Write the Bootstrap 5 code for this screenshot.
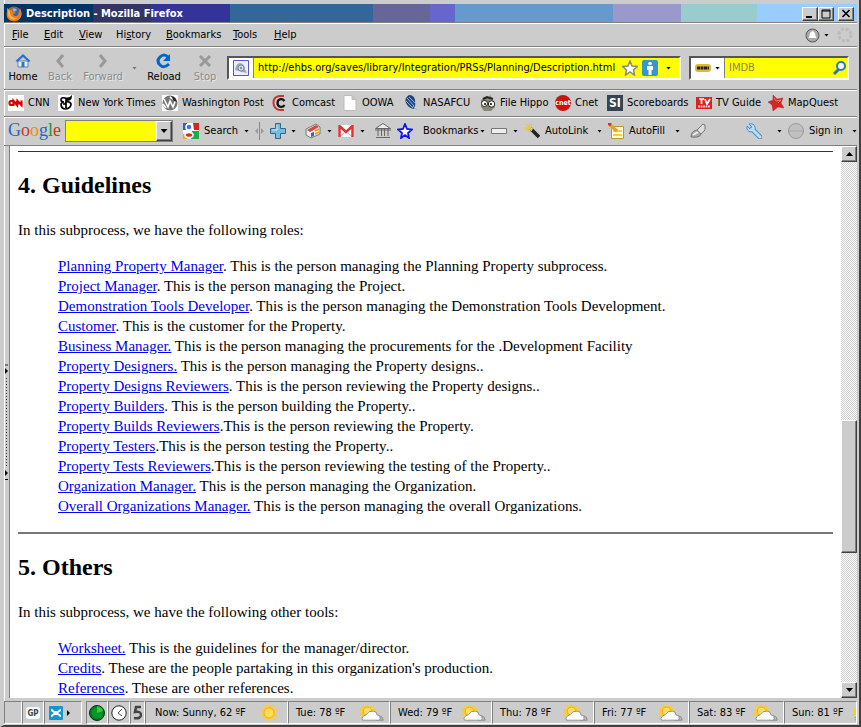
<!DOCTYPE html>
<html lang="en">
<head>
<meta charset="utf-8">
<meta name="viewport" content="width=device-width, initial-scale=1">
<title>Description - Mozilla Firefox</title>
<link href="https://cdn.jsdelivr.net/npm/bootstrap@5.3.0/dist/css/bootstrap.min.css" rel="stylesheet">
<style>
:root{--face:#ccc;--dark:#808080;--hot:#ff0}
body{font:11px/14px "DejaVu Sans Condensed",Tahoma,"Noto Sans",sans-serif;color:#000;background:var(--face)}
svg{flex:none;display:block}
button{font:inherit;color:inherit;background:none;border:0;padding:0;text-align:left}
.win{border:solid;border-width:0 2px 2px 4px;border-color:var(--face) #404040 #404040 var(--face);padding-right:2px;box-shadow:inset 1px 0 #fff}
.bar{border-bottom:1px solid var(--dark);box-shadow:inset 0 1px #fff;flex:none}
.titlebar{margin-top:4px;height:18px;padding:1px 3px 0 2px;color:#fff;font-weight:bold;background:linear-gradient(90deg,#036 10.4%,#336 10.4% 17.2%,#339 17.2% 26.5%,#369 26.5% 43.3%,#669 43.3% 49.9%,#66c 49.9% 52.9%,#69c 52.9% 71.4%,#99c 71.4% 79.4%,#9cc 79.4% 88.3%,#9cf 88.3%)}
.raised{background:var(--face);border:1px solid;border-color:#fff #404040 #404040 #fff;box-shadow:inset -1px -1px var(--dark);display:flex;align-items:center;justify-content:center;flex:none}
.titlebar .raised{width:16px;height:14px}
.menus{height:25px;border-top:1px solid var(--dark);padding-top:1px}
.menus>button{white-space:nowrap;flex:none}
.menus>:nth-child(1){width:32px}.menus>:nth-child(2){width:35px}.menus>:nth-child(3){width:37px}
.menus>:nth-child(4){width:50px}.menus>:nth-child(5){width:67px}.menus>:nth-child(6){width:41px}
.navrow{height:43px}
.tool{display:flex;flex-direction:column;align-items:center;gap:1px;width:36px;flex:none}
.tool:disabled{color:#8a8a8a;text-shadow:1px 1px #e8e8e8}
.tool.first{width:38px}.tool.mid{width:46px}.tool.wide{width:50px}
.sunken{border:2px solid;border-color:#555 #fff #fff #555;background:var(--hot);height:24px}
.sunken input,.combo input{background:transparent;border:0;outline:0;min-width:0;padding:0 4px;font:inherit;color:#000;flex:1}
.sunken input::placeholder{color:#8a8a50}
.seek{width:160px;flex:none}
.chip{background:#fff;align-self:stretch;border-right:1px solid var(--dark)}
.arr{width:5px;height:3px;background:#000;clip-path:polygon(0 0,100% 0,50% 100%);flex:none}
.arr.big{width:7px;height:4px}
.marks{height:27px}
.marks a{color:#000;text-decoration:none;display:flex;align-items:center;gap:4px;white-space:nowrap;flex:none}
.marks>:nth-child(1){width:50px}.marks>:nth-child(2){width:104px}.marks>:nth-child(3){width:110px}
.marks>:nth-child(4){width:70px}.marks>:nth-child(5){width:61px}.marks>:nth-child(6){width:77px}
.marks>:nth-child(7){width:75px}.marks>:nth-child(8){width:52px}.marks>:nth-child(9){width:89px}.marks>:nth-child(10){width:72px}
.goog{height:29px;gap:6px}
.goog button{display:flex;align-items:center;gap:5px;white-space:nowrap;flex:none}
.goog .arr{margin-left:auto}
.logo{font:18px/22px "Liberation Serif",serif;width:51px;flex:none;padding-bottom:3px}
.combo{border:1px solid var(--dark);background:var(--hot);width:108px;height:22px;flex:none}
.goog .combo .raised{width:16px;height:20px}
.w24{width:25px}.w26{width:27px}.w62{width:62px}.w66{width:66px}.w68{width:69px}.w72{width:72px}.w78{width:78px}.w36{width:36px}
.splitter{width:6px;border-right:1px solid var(--dark);flex:none}
.grip{width:1px;height:88px;background:repeating-linear-gradient(#333 0 1px,transparent 1px 3px)}
.page{background:#fff;font:15px/20px "Liberation Serif","Times New Roman",serif;padding:0 8px;overflow:hidden}
.page h2{font-size:24px;line-height:28px;font-weight:bold;margin:19px 0 21px}
.page hr{margin:0;border:0;border-top:2px solid #777;opacity:1}
.page hr:first-child{margin-top:5px;border-top:1px solid #333}
.page p{margin:0 0 16px}
.page ul{margin:0 0 16px;padding-left:40px;list-style:none}
.page a{color:#00e;text-decoration:underline}
.scroll{width:16px;background:repeating-conic-gradient(#ccc 0 25%,#fff 0 50%) 0 0/2px 2px;flex:none}
.scroll .raised{height:16px;width:100%}
.scroll .thumb{height:133px}
.above{flex:259 0 0}.below{flex:129 0 0}
.status{height:25px;flex:none;margin-top:2px}
.cell{border:1px solid;border-color:var(--dark) #fff #fff var(--dark);display:flex;align-items:center;justify-content:center;flex:none;height:23px;white-space:nowrap}
.day{justify-content:space-between;padding:0 4px 0 7px;width:102px}
.now{width:143px;padding:0 8px 0 9px}
.day.slim{width:95px}.day.end{flex:1 1 0;overflow:hidden;justify-content:flex-start;gap:8px}
.c14{width:15px}.c18{width:18px}.c22{width:22px}.c38{width:38px}
</style>
<script src="https://cdn.jsdelivr.net/npm/bootstrap@5.3.0/dist/js/bootstrap.bundle.min.js"></script>
</head>
<body>
<svg width="0" height="0" class="position-absolute" aria-hidden="true">
<symbol id="sun" viewBox="0 0 20 20"><path d="M10 0l2 4 4-2-1 4 5 0-4 4 4 4-5-1 1 5-4-3-2 4-2-4-4 3 1-5-5 0 4-4-4-3 5 0-1-5 4 3z" fill="#fc3"/><circle cx="10" cy="10" r="5" fill="#fd5" stroke="#fa1"/></symbol>
<symbol id="pcl" viewBox="0 0 28 20"><path d="M9 0l2 3 4-2 0 4 4 0-2 4 3 3-5 1-1 4-4-3-4 3-1-4-4 0 2-4-3-3 4-1 0-4 4 2z" fill="#fc2"/><circle cx="9.500" cy="8" r="4.500" fill="#fd6" stroke="#f9a51a"/><path d="M19 18q0-5 4-5 4 1 4 5z" fill="#bbb" stroke="#888"/><path d="M4 18q-2-4 4-6 3-5 8-4 4 0 4 4 5 1 3 6z" fill="#fff" stroke="#888"/></symbol>
</svg>
<div class="win d-flex flex-column vh-100 overflow-hidden">

<header class="titlebar d-flex align-items-center flex-shrink-0">
<svg width="16" height="16" viewBox="0 0 16 16" class="me-1"><circle cx="8" cy="8" r="7.500" fill="#d8541b"/><circle cx="8.500" cy="6.500" r="5" fill="#3468a8"/><path d="M6 3q3-2 5 1l-3 2z" fill="#8bd"/><path d="M1 2l3 2 3-1-1 2 4 2-3 1q1 4 5 1l2-7q4 8-2 12-8 3-11-3z" fill="#f07a1f"/><path d="M2 4q2 0 2 3 1 5 7 5-3 3-6 1-4-2-3-9" fill="#fdb338"/></svg>
<span class="flex-grow-1">Description - Mozilla Firefox</span>
<button class="raised" aria-label="Minimize"><svg width="10" height="9"><path d="M1 8h6" stroke="#000" stroke-width="2"/></svg></button>
<button class="raised" aria-label="Maximize"><svg width="10" height="10"><path d="M1 1h8v8H1zM1 2h8" fill="none" stroke="#000"/></svg></button>
<button class="raised ms-1" aria-label="Close"><svg width="10" height="9"><path d="M1.500 1l7 7M8.500 1l-7 7" stroke="#000" stroke-width="1.600"/></svg></button>
</header>

<nav class="bar menus d-flex align-items-center ps-2">
<button><u>F</u>ile</button><button><u>E</u>dit</button><button><u>V</u>iew</button><button>Hi<u>s</u>tory</button><button><u>B</u>ookmarks</button><button><u>T</u>ools</button><button><u>H</u>elp</button>
<button class="ms-auto d-flex align-items-center gap-1 me-2" aria-label="Updates"><svg width="15" height="15"><circle cx="7.500" cy="7.500" r="6.500" fill="#aaa" stroke="#555"/><path d="M7.500 3q3 1 3 5l1 2h-8l1-2q0-4 3-5z" fill="#fff"/></svg><span class="arr"></span></button>
<svg width="16" height="16" class="me-1"><circle cx="8" cy="8" r="6" fill="none" stroke="#bbb" stroke-width="3" stroke-dasharray="3 1.710"/></svg>
</nav>

<div class="bar navrow d-flex align-items-center">
<button class="tool first"><svg width="16" height="16" viewBox="0 0 15 16"><path d="M2.500 8h10v6h-10z" fill="#e8f0ff" stroke="#58a"/><path d="M0 8l7.500-7L15 8l-2 1-5.500-5L2 9z" fill="#2a6fd6"/><path d="M6 9h3v5H6z" fill="#37a"/></svg>Home</button>
<button class="tool" disabled><svg width="12" height="16"><path d="M9 2L4 8l5 6" fill="none" stroke="#999" stroke-width="3"/></svg>Back</button>
<button class="tool wide" disabled><svg width="12" height="16"><path d="M3 2l5 6-5 6" fill="none" stroke="#999" stroke-width="3"/></svg>Forward</button>
<button class="px-1" disabled aria-label="Recent pages"><span class="arr d-block bg-secondary"></span></button>
<button class="tool mid"><svg width="16" height="16" viewBox="0 0 16 16"><path d="M12 4Q8 0 4 4T4 12t9-1" fill="none" stroke="#06c" stroke-width="3"/><path d="M14 1v7H7z" fill="#06c"/></svg>Reload</button>
<button class="tool" disabled><svg width="14" height="16"><path d="M2 3l10 10M12 3L2 13" stroke="#999" stroke-width="3"/></svg>Stop</button>
<div class="sunken d-flex align-items-center flex-grow-1 ms-1 me-2">
<span class="chip px-1 d-flex align-items-center"><svg width="16" height="16"><path d="M.5.5h15v15H.5z" fill="#eef" stroke="#55c"/><path d="M2 10q1-7 5-7 5 1 5 6l2 4-5-1z" fill="#9aabb5"/><circle cx="8" cy="8" r="3" fill="#cde" stroke="#789"/><circle cx="8" cy="8" r="1" fill="#678"/></svg></span>
<input type="text" aria-label="Location" value="http://ehbs.org/saves/library/Integration/PRSs/Planning/Description.html">
<svg width="16" height="16" viewBox="0 0 16 16"><path d="M8 1l2 5 5.500.5-4 3.500 1 5L8 12l-4.500 3 1-5-4-3.500L6 6z" fill="#fff" stroke="#888" stroke-width="1.500"/></svg>
<svg width="16" height="16" class="ms-1"><rect width="16" height="16" rx="2" fill="#39c"/><circle cx="8" cy="3.500" r="1.800" fill="#fff"/><path d="M5 6h6v4h-1.500v5h-3v-5H5z" fill="#fff"/></svg>
<span class="arr mx-2"></span></div>
<div class="sunken seek d-flex align-items-center me-2">
<button class="chip d-flex align-items-center gap-1 px-1" aria-label="Search engine"><svg width="16" height="12"><rect y="2" width="16" height="8" rx="3" fill="#db3"/><path d="M2 6h12" stroke="#222" stroke-width="3" stroke-dasharray="3 .5"/></svg><span class="arr"></span></button>
<input type="text" placeholder="IMDB" aria-label="Search IMDB">
<svg width="15" height="16"><path d="M7 9l-5 5" stroke="#27a" stroke-width="3"/><circle cx="9" cy="6" r="4" fill="#eff" stroke="#37b" stroke-width="2"/></svg></div>
</div>

<nav class="bar marks d-flex align-items-center ps-1">
<a href="#"><svg width="16" height="16"><path fill="#fff" d="M0 0h16v16H0z"/><path d="M5 6H3Q1.500 6 1.500 8T3 10h2.500V6L9 10V6l0 0M9.500 10V6l4 4V5.500" fill="none" stroke="#d00" stroke-width="2.200"/></svg>CNN</a>
<a href="#"><svg width="16" height="16"><path fill="#fff" d="M0 0h16v16H0z"/><path d="M3 5q0-3 4-2t6-1q0 3-4 3l-1 2q4-1 5 2 0 4-5 5-5 0-5-5 1-2 3-2Q3 7 3 5M8 4v9M5 9h3" fill="none" stroke="#000" stroke-width="1.700"/></svg>New York Times</a>
<a href="#"><svg width="16" height="16"><path fill="#fff" d="M0 0h16v16H0z"/><circle cx="8" cy="8" r="7.500" fill="#777"/><path d="M2 4l4 8 2-6 3 6 3-8M1 9l3 4M8 2l3 2" fill="none" stroke="#fff" stroke-width="1.600"/><path d="M9 1q5 1 6 6l-3-1z" fill="#222"/></svg>Washington Post</a>
<a href="#"><svg width="16" height="16"><path d="M12 1Q1 0 1.500 8T12 15" fill="none" stroke="#c33" stroke-width="2"/><path d="M12.500 6Q11 4 9 4 5.500 4.500 5.500 8T9 12q2.500 0 3.500-2" fill="none" stroke="#111" stroke-width="2.200"/></svg>Comcast</a>
<a href="#"><svg width="16" height="16"><path d="M2 .5h8l4 4v11H2zM10 .5v4h4" fill="#fff" stroke="#bbb"/></svg>OOWA</a>
<a href="#"><svg width="16" height="16"><path d="M6 0q5 0 6 5t-1 9q-6-1-8-6T6 0z" fill="#247"/><path d="M4 3l7 8M3 6l7 7M6 2l6 6M10 11l4 4" stroke="#8be" fill="none"/></svg>NASAFCU</a>
<a href="#"><svg width="16" height="16"><path d="M1 5l4-3 3 1 3-3v4l3 2 1 6-4 4H4L1 12z" fill="#887"/><path d="M3 4l4-2 6 2" stroke="#222" stroke-width="2" fill="none"/><circle cx="4.500" cy="8.500" r="3" fill="#fff" stroke="#222"/><circle cx="11.500" cy="9" r="3.200" fill="#fff" stroke="#222"/><circle cx="5" cy="9" r="1"/><circle cx="11" cy="9" r="1"/></svg>File Hippo</a>
<a href="#"><svg width="16" height="16"><circle cx="8" cy="8" r="8" fill="#c11"/><text x="8" y="10" text-anchor="middle" font-size="7" font-weight="bold" fill="#fff">cnet</text></svg>Cnet</a>
<a href="#"><svg width="16" height="16"><path fill="#345" d="M0 0h16v16H0z"/><text x="8" y="12" text-anchor="middle" font-size="12" font-weight="bold" fill="#fff">SI</text></svg>Scoreboards</a>
<a href="#"><svg width="16" height="16"><path fill="#d22" d="M0 2h16v12H0z"/><path d="M3 4h5M5.500 4v5M9 4l2 5 3-5" fill="none" stroke="#fff" stroke-width="1.700"/><path d="M2 11.500h12" stroke="#fbb" stroke-width="2" stroke-dasharray="2 .5"/></svg>TV Guide</a>
<a href="#"><svg width="16" height="16"><path d="M5 0l4 4 6-1-2 5 3 5-6-1-5 4-1-6-4-3 5-2z" fill="#d22" stroke="#a33" stroke-width=".5"/><path d="M6 3l2 3 5-1-3 3" fill="none" stroke="#f77"/></svg>MapQuest</a>
</nav>

<div class="bar goog d-flex align-items-center ps-1">
<span class="logo"><span style="color:#26c">G</span><span style="color:#c32">o</span><span style="color:#d90">o</span><span style="color:#26c">g</span><span style="color:#292">l</span><span style="color:#c32">e</span></span>
<div class="combo d-flex align-items-center me-1"><input type="text" aria-label="Google search" class="w-100"><button class="raised" aria-label="History"><span class="arr big mx-auto"></span></button></div>
<button class="w66"><svg width="16" height="16"><path fill="#fff" d="M0 0h16v16H0z"/><path d="M10 0h6v7h-5z" fill="#d22"/><path d="M0 0h4v7H0z" fill="#26c"/><path d="M9 8h7v8H8z" fill="#2a4"/><path d="M0 11h4v5H0z" fill="#ea2"/><circle cx="6" cy="4" r="3" fill="#37d" stroke="#fff" stroke-width="1.500"/><ellipse cx="6" cy="12" rx="4" ry="2.500" fill="#c33" stroke="#fff" stroke-width="1.500"/></svg>Search<span class="arr"></span></button>
<svg width="9" height="18"><path d="M4.500 0v18" stroke="#888"/><path d="M3 6L0 9l3 3zM6 6l3 3-3 3z" fill="#999"/></svg>
<button class="w24 me-1" aria-label="Add"><svg width="16" height="16"><path d="M5.500.5h5v5h5v5h-5v5h-5v-5h-5v-5h5z" fill="#7bd" stroke="#368"/><path d="M7 2v5H2" fill="none" stroke="#cef"/></svg><span class="arr"></span></button>
<button class="w26" aria-label="News"><svg width="16" height="16"><path d="M1 6l10-5 4 3v7l-9 4-5-3z" fill="#eee" stroke="#777"/><path d="M2 7l9-5 3 2-9 5z" fill="#d44"/><path d="M6 10l3-1v4l-3 1z" fill="#36c"/><path d="M10 8l4-2M10 11l4-2" stroke="#e90" stroke-width="1.500"/></svg><span class="arr"></span></button>
<button class="w26 me-1" aria-label="Mail"><svg width="16" height="12"><path fill="#fff" d="M0 0h16v12H0z"/><path d="M1.500 12V1L8 7l6.500-6v11" fill="none" stroke="#d33" stroke-width="2.500"/><path d="M3 11l4-4M13 11L9 7" stroke="#daa"/></svg><span class="arr"></span></button>
<button aria-label="Bank"><svg width="16" height="16"><path d="M.5 5.500L8 .5l7.500 5zM1 14.500h14M3 6v7M6.500 6v7M9.500 6v7M13 6v7M0 7h16" fill="#eee" stroke="#666"/></svg></button>
<button class="me-1" aria-label="Bookmark"><svg width="16" height="16"><path d="M8 1l2 5 5 .5-4 3.500 1 5-4-3-4 3 1-5-4-3.500L6 6z" fill="#fff" stroke="#11e" stroke-width="1.800"/></svg></button>
<button class="w62 gap-0">Bookmarks<span class="arr"></span></button>
<button class="w26" aria-label="PageRank"><svg width="16" height="6"><path d="M.5.5h15v5H.5z" fill="#eee" stroke="#777"/></svg><span class="arr"></span></button>
<button class="w78"><svg width="16" height="16"><path d="M6 5l9 9" stroke="#222" stroke-width="3.500"/><path d="M5 4l3 3" stroke="#ccc" stroke-width="3"/><path d="M5 0v9M0 5h10M2 1l6 7M8 1L2 8" stroke="#e8c53a"/></svg>AutoLink<span class="arr"></span></button>
<button class="w72"><svg width="16" height="16"><path d="M3.500 3.500h12v12h-12z" fill="#ffd" stroke="#b92"/><path d="M5 8h9M5 12h9" stroke="#fc3" stroke-width="2"/><path d="M1 1l8 7" stroke="#e92" stroke-width="3"/><path d="M0 0l3 2" stroke="#c33" stroke-width="3"/></svg>AutoFill<span class="arr"></span></button>
<button class="ms-1" aria-label="Highlight"><svg width="16" height="16"><path d="M7 7l6-6 2 1v5l-4 4z" fill="#ddd" stroke="#777"/><path d="M1 14q0-6 6-7l4 4q-1 4-10 3z" fill="#aaa" stroke="#777"/><path d="M3 12l5-3" stroke="#eee" stroke-width="2"/></svg></button>
<button class="w36 ms-auto" aria-label="Settings"><svg width="16" height="16"><path d="M6 6l8 8" stroke="#468fc8" stroke-width="5" stroke-linecap="round"/><path d="M3 1l3 3-2 2-3-3q-1 5 4 6 5-1 4-5-1-4-6-3z" fill="#bdf" stroke="#468fc8"/><path d="M6 6l8 8" stroke="#bdf" stroke-width="3" stroke-linecap="round"/></svg><span class="arr"></span></button>
<button class="w68"><svg width="16" height="16"><circle cx="8" cy="8" r="7.500" fill="#c0c0c0" stroke="#999"/><path d="M1 8h14" stroke="#aaa"/></svg>Sign in<span class="arr"></span></button>
</div>

<main class="d-flex flex-grow-1 overflow-hidden">
<div class="splitter d-flex flex-column align-items-center justify-content-center gap-1">
<svg width="4" height="10"><path d="M0 1h3" stroke="#222"/><path d="M0 4l3 3-3 3z"/></svg><span class="grip"></span><svg width="4" height="11"><path d="M0 0l3 3-3 3zM0 9h3v1H0z"/></svg></div>
<article class="page flex-grow-1">
<hr>
<h2>4. Guidelines</h2>
<p>In this subprocess, we have the following roles:</p>
<ul>
<li><a href="#">Planning Property Manager</a>. This is the person managing the Planning Property subprocess.</li>
<li><a href="#">Project Manager</a>. This is the person managing the Project.</li>
<li><a href="#">Demonstration Tools Developer</a>. This is the person managing the Demonstration Tools Development.</li>
<li><a href="#">Customer</a>. This is the customer for the Property.</li>
<li><a href="#">Business Manager.</a> This is the person managing the procurements for the .Development Facility</li>
<li><a href="#">Property Designers.</a> This is the person managing the Property designs..</li>
<li><a href="#">Property Designs Reviewers</a>. This is the person reviewing the Property designs..</li>
<li><a href="#">Property Builders</a>. This is the person building the Property..</li>
<li><a href="#">Property Builds Reviewers</a>.This is the person reviewing the Property.</li>
<li><a href="#">Property Testers</a>.This is the person testing the Property..</li>
<li><a href="#">Property Tests Reviewers</a>.This is the person reviewing the testing of the Property..</li>
<li><a href="#">Organization Manager.</a> This is the person managing the Organization.</li>
<li><a href="#">Overall Organizations Manager.</a> This is the person managing the overall Organizations.</li>
</ul>
<hr>
<h2>5. Others</h2>
<p>In this subprocess, we have the following other tools:</p>
<ul>
<li><a href="#">Worksheet.</a> This is the guidelines for the manager/director.</li>
<li><a href="#">Credits</a>. These are the people partaking in this organization's production.</li>
<li><a href="#">References</a>. These are other references.</li>
</ul>
</article>
<div class="scroll d-flex flex-column">
<button class="raised" aria-label="Scroll up"><svg width="7" height="4"><path d="M3.500 0L7 4H0z"/></svg></button>
<div class="flex-grow-1 d-flex flex-column"><span class="above"></span><span class="raised thumb"></span><span class="below"></span></div>
<button class="raised" aria-label="Scroll down"><svg width="7" height="4"><path d="M3.500 4L7 0H0z"/></svg></button>
</div>
</main>

<footer class="status d-flex align-items-center overflow-hidden">
<span class="cell c18"></span>
<span class="cell c22"><svg width="14" height="12"><rect width="14" height="12" rx="3" fill="#eff"/><text x="7" y="9" text-anchor="middle" font-size="8" font-weight="bold" fill="#444">GP</text></svg></span>
<span class="cell c38 gap-1 justify-content-start ps-1 me-1"><svg width="14" height="14"><rect width="14" height="14" rx="1" fill="#19c"/><path d="M2 3q2 0 3 2h4q1-2 3-2v2L9 7l3 2v2q-2 0-3-2H5q-1 2-3 2V9l3-2-3-2z" fill="#fff"/></svg><svg width="3" height="6"><path d="M0 0l3 3-3 3z"/></svg></span>
<span class="cell c22"><svg width="16" height="16"><circle cx="8" cy="8" r="7.500" fill="#073" stroke="#030"/><circle cx="8" cy="8" r="5.500" fill="#092"/><path d="M8 8V1q5 1 6 5z" fill="#3c3"/></svg></span>
<span class="cell c22"><svg width="16" height="16"><circle cx="8" cy="8" r="7.200" fill="#fff" stroke="#222"/><path d="M11 4L7 8l4 3" fill="none" stroke="#444"/></svg></span>
<span class="cell c14"><svg width="11" height="15"><path d="M9 2H4L3 7q6-1 6 3 0 4-7 3" fill="none" stroke="#444" stroke-width="2.500"/></svg></span>
<span class="cell day now"><span>Now: Sunny, 62 ºF</span><svg width="20" height="20"><use href="#sun"/></svg></span>
<span class="cell day"><span>Tue: 78 ºF</span><svg width="27" height="18"><use href="#pcl"/></svg></span>
<span class="cell day"><span>Wed: 79 ºF</span><svg width="27" height="18"><use href="#pcl"/></svg></span>
<span class="cell day"><span>Thu: 78 ºF</span><svg width="27" height="18"><use href="#pcl"/></svg></span>
<span class="cell day slim"><span>Fri: 77 ºF</span><svg width="27" height="18"><use href="#pcl"/></svg></span>
<span class="cell day slim"><span>Sat: 83 ºF</span><svg width="27" height="18"><use href="#pcl"/></svg></span>
<span class="cell day end"><span>Sun: 81 ºF</span><svg width="27" height="18"><use href="#pcl"/></svg></span>
</footer>
</div>
</body>
</html>
